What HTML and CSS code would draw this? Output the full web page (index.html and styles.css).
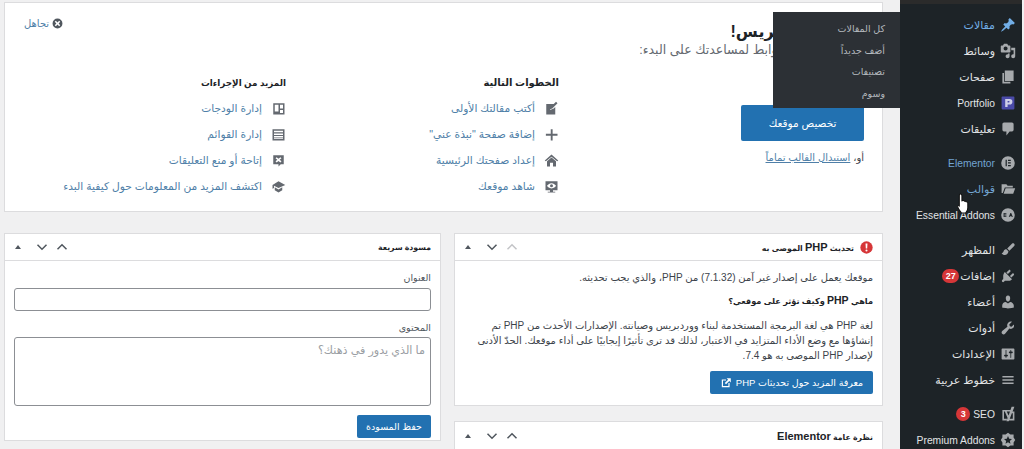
FILE: index.html
```html
<!DOCTYPE html>
<html lang="ar" dir="rtl">
<head>
<meta charset="utf-8">
<title>لوحة التحكم</title>
<link rel="stylesheet" href="styles.css">
</head>
<body>
<aside class="side">
  <nav class="menu">
    <a class="item cur"><svg class="ic" viewBox="0 0 20 20"><path d="M10.440 3.020l1.820-1.820 6.360 6.350-1.830 1.820c-1.050-.68-2.480-.57-3.410.36l-.75.75c-.92.93-1.040 2.350-.35 3.410l-1.830 1.820-2.410-2.410-2.800 2.790c-.42.42-3.380 2.710-3.800 2.290s1.860-3.390 2.280-3.810l2.790-2.790L4.100 9.360l1.830-1.820c1.050.69 2.480.57 3.400-.36l.75-.75c.93-.92 1.050-2.350.36-3.410z"/></svg><span>مقالات</span></a>
    <a class="item"><svg class="ic" viewBox="0 0 20 20"><path d="M13 11V4c0-.55-.45-1-1-1h-1.670L9 1H5L3.670 3H2c-.55 0-1 .45-1 1v7c0 .55.45 1 1 1h10c.55 0 1-.45 1-1zM7 4.500c1.380 0 2.500 1.120 2.500 2.500S8.380 9.500 7 9.500 4.500 8.380 4.500 7 5.620 4.500 7 4.500zM14 6h5v10.500c0 1.380-1.120 2.500-2.500 2.500S14 17.880 14 16.500s1.120-2.500 2.500-2.500c.17 0 .34.020.5.050V9h-3V6zm-4 8.050V13h2v3.500c0 1.380-1.120 2.500-2.500 2.500S7 17.880 7 16.500 8.120 14 9.500 14c.17 0 .34.020.5.050z"/></svg><span>وسائط</span></a>
    <a class="item"><svg class="ic" viewBox="0 0 20 20"><path d="M6 15V2h11v13zm-1 1h8v2H3V5h2z"/></svg><span>صفحات</span></a>
    <a class="item"><svg class="ic" viewBox="0 0 20 20"><rect x="2" y="2" width="16" height="16" rx="1" fill="#4a4aa8"/><path fill-rule="evenodd" d="M6.500 5H12a3.500 3.500 0 010 7H9.500v3h-3zm3 2.500v2H11a1 1 0 000-2z" fill="#cfcfe8"/></svg><span class="lat">Portfolio</span></a>
    <a class="item"><svg class="ic" viewBox="0 0 20 20"><path d="M5 2h10c1.100 0 2 .9 2 2v7c0 1.100-.9 2-2 2h-3l-4 5v-5H5c-1.100 0-2-.9-2-2V4c0-1.100.9-2 2-2z"/></svg><span>تعليقات</span></a>
    <a class="item gap cur"><svg class="ic" viewBox="0 0 20 20"><path fill-rule="evenodd" d="M10 1.500a8.500 8.500 0 100 17 8.500 8.500 0 000-17zM7 6h1.500v8H7zm3 0h3.500v1.500H10zm0 3.200h3.500v1.500H10zm0 3.300h3.500V14H10z"/></svg><span class="lat">Elementor</span></a>
    <a class="item cur"><svg class="ic grey" viewBox="0 0 20 20"><path d="M2 4h6l1.500 2H16v2H6L3.500 15H2zM7 9h12l-2.500 7H4.500z"/></svg><span>قوالب</span></a>
    <a class="item"><svg class="ic" viewBox="0 0 20 20"><path fill-rule="evenodd" d="M10 1.500a8.500 8.500 0 100 17 8.500 8.500 0 000-17zM4.500 7.500H8v1H5.500v1H8v1H5.500v1H8v1H4.500zm8.500 0h1l2 5h-1.200l-.4-1h-2l-.4 1h-1z"/></svg><span class="lat">Essential Addons</span></a>
    <a class="item gap3"><svg class="ic" viewBox="0 0 20 20"><path d="M17.700 2.300c-.8-.8-2-.8-2.800 0L9 8.200l2.800 2.800 5.900-5.900c.8-.8.8-2 0-2.800zM8 9.200c-1.500 0-3 .8-3.500 2.300-.4 1.200-1.300 2.200-2.500 2.500 1.500 2.500 5 3 7 1 1.200-1.200 1.500-2.500 1.500-3.300z"/></svg><span>المظهر</span></a>
    <a class="item"><svg class="ic" viewBox="0 0 20 20"><path d="M13.110 4.360L9.870 7.600 8 5.730l3.240-3.240c.35-.34 1.050-.2 1.560.32.520.51.660 1.210.31 1.550zm-8 1.770l.91-1.120 9.010 9.010-1.190.84c-.71.710-2.630 1.160-3.820 1.160H6.140L4.900 17.260c-.59.590-1.540.590-2.120 0-.59-.58-.59-1.530 0-2.120l1.240-1.240v-3.880c0-1.130.52-3.090 1.090-3.890zm7.260 3.970l3.240-3.240c.34-.35 1.040-.2 1.550.31.520.51.660 1.210.31 1.550l-3.240 3.250z"/></svg><span>إضافات</span><b class="count">27</b></a>
    <a class="item"><svg class="ic" viewBox="0 0 20 20"><path d="M10 9.250c-2.270 0-2.730-3.440-2.730-3.440C7 4.020 7.820 2 9.970 2c2.160 0 2.980 2.020 2.710 3.810 0 0-.41 3.440-2.680 3.440zm0 2.570L12.720 10c2.390 0 4.520 2.330 4.520 4.530v2.490s-3.650 1.130-7.240 1.130c-3.650 0-7.240-1.130-7.240-1.130v-2.490c0-2.250 1.940-4.480 4.470-4.480z"/></svg><span>أعضاء</span></a>
    <a class="item"><svg class="ic" viewBox="0 0 20 20"><path d="M16.680 9.770c-1.340 1.340-3.300 1.670-4.950.99l-5.410 6.520c-.99.990-2.590.990-3.580 0s-.99-2.590 0-3.570l6.520-5.420c-.68-1.650-.35-3.610.99-4.950 1.280-1.280 3.120-1.640 4.720-1.080L11.570 5.660l.71 2.120 2.120.71 2.910-2.910c.56 1.600.2 3.440-.63 4.190z"/></svg><span>أدوات</span></a>
    <a class="item"><svg class="ic" viewBox="0 0 20 20"><path d="M18 16V4c0-.55-.45-1-1-1H3c-.55 0-1 .45-1 1v12c0 .55.45 1 1 1h14c.55 0 1-.45 1-1zM8 11h1c.55 0 1 .45 1 1s-.45 1-1 1H8v1.500c0 .28-.22.5-.5.5s-.5-.22-.5-.5V13H6c-.55 0-1-.45-1-1s.45-1 1-1h1V5.500c0-.28.22-.5.5-.5s.5.22.5.5V11zm5-2h-1c-.55 0-1-.45-1-1s.45-1 1-1h1V5.500c0-.28.22-.5.5-.5s.5.22.5.5V7h1c.55 0 1 .45 1 1s-.45 1-1 1h-1v5.500c0 .28-.22.5-.5.5s-.5-.22-.5-.5V9z"/></svg><span>الإعدادات</span></a>
    <a class="item"><svg class="ic" viewBox="0 0 20 20"><path d="M3 5h14v2H3zm0 4h14v2H3zm0 4h14v2H3z"/></svg><span>خطوط عربية</span></a>
    <a class="item gap2"><svg class="ic" viewBox="0 0 20 20"><path d="M3 5h11l-1 2H5v9h4l-1 2H3zM18 1l-7 18H8l1.500-4L6 7h2.500l2.200 5L14.500 1zM15 7h3v11h-8l1-2h5V9h-2z"/></svg><span class="lat">SEO</span><b class="count round">3</b></a>
    <a class="item"><svg class="ic" viewBox="0 0 20 20"><path fill-rule="evenodd" d="M10 1l3 2h4v4l2 3-2 3v4h-4l-3 2-3-2H3v-4l-2-3 2-3V3h4zm0 4l-1.500 3.500-3.500.3 2.700 2.300-.8 3.500 3.100-1.800 3.100 1.800-.8-3.500L15 8.800l-3.500-.3z"/></svg><span class="lat">Premium Addons</span></a>
  </nav>
</aside>

<main class="main">
  <section class="welcome">
    <a class="dismiss"><svg class="x" viewBox="0 0 20 20"><path fill-rule="evenodd" d="M10 1a9 9 0 100 18 9 9 0 000-18zM7 5l3 3 3-3 2 2-3 3 3 3-2 2-3-3-3 3-2-2 3-3-3-3z"/></svg>تجاهل</a>
    <h2>أهلاً بووردبريس!</h2>
    <p class="about">جمعنا بعض الروابط لمساعدتك على البدء:</p>
    <div class="cols">
      <div class="col first">
        <a class="btn big">تخصيص موقعك</a>
        <p class="alt">أو، <a>استبدال القالب تماماً</a></p>
      </div>
      <div class="col second">
        <h3>الخطوات التالية</h3>
        <a class="act"><svg viewBox="0 0 20 20"><path d="M3 4h10l-3 3-2 5 5-2 2-2v10H3zM16 1l2 2-7 7-3 1 1-3z"/></svg>أكتب مقالتك الأولى</a>
        <a class="act"><svg viewBox="0 0 20 20"><path d="M9 3h2.500v6H18v2.500h-6.500V18H9v-6.500H2.500V9H9z"/></svg>إضافة صفحة "نبذة عني"</a>
        <a class="act"><svg viewBox="0 0 20 20"><path d="M10 2l9 8-1.500 1L10 5l-7.500 6L1 10zM4 11l6-5 6 5v7h-4v-5H8v5H4z"/></svg>إعداد صفحتك الرئيسية</a>
        <a class="act"><svg viewBox="0 0 20 20"><path fill-rule="evenodd" d="M2 3h16v12h-6v2h3v1H5v-1h3v-2H2zm8 2.500c-3 0-5 2-6 3.500 1 1.500 3 3.500 6 3.500s5-2 6-3.500c-1-1.500-3-3.500-6-3.500zM10 7a2 2 0 110 4 2 2 0 010-4z"/></svg>شاهد موقعك</a>
      </div>
      <div class="col third">
        <h3>المزيد من الإجراءات</h3>
        <a class="act"><svg viewBox="0 0 20 20"><path fill-rule="evenodd" d="M3 3h15v15H3zm9 2v5h4V5zM5 5v9h5V5zm7 7v4h4v-4z"/></svg>إدارة الودجات</a>
        <a class="act"><svg viewBox="0 0 20 20"><path fill-rule="evenodd" d="M2 3h16v15H2zm2 2v2h12V5zm0 3.500v2h12v-2zm0 3.500v2h12v-2zm0 3v1h12v-1z"/></svg>إدارة القوائم</a>
        <a class="act"><svg viewBox="0 0 20 20"><path fill-rule="evenodd" d="M3 3h14v12h-4l-3 3v-3H3zm4.500 2.500L6 7l2.500 2L6 11l1.500 1.500L10 10.500l2.500 2L14 11l-2.500-2L14 7l-1.500-1.500L10 7.500z"/></svg>إتاحة أو منع التعليقات</a>
        <a class="act"><svg viewBox="0 0 20 20"><path d="M10 3l9 5-9 4-6-3v3l-2 1V8zM5 11l5 3 5-3v4l-5 3-5-3z"/></svg>اكتشف المزيد من المعلومات حول كيفية البدء</a>
      </div>
    </div>
  </section>

  <div class="boxes">
    <div class="stack">
      <section class="box">
        <header class="head">
          <h4><svg class="warn" viewBox="0 0 20 20"><circle cx="10" cy="10" r="9.500"/><path d="M8.500 4h3l-.4 7.500H8.900zM10 13a1.600 1.600 0 110 3.200 1.600 1.600 0 010-3.200z" fill="#fff"/></svg><span>تحديث <em class="en">PHP</em> الموصى به</span></h4>
          <div class="ctl"><svg viewBox="0 0 16 10"><path d="M2 8l6-6 6 6" class="dim"/></svg><svg viewBox="0 0 16 10"><path d="M2 2l6 6 6-6"/></svg><i class="tri"></i></div>
        </header>
        <div class="body php">
          <p>موقعك يعمل على إصدار غير آمن (7.1.32) من PHP، والذي يجب تحديثه.</p>
          <p class="q">ماهي <em class="en">PHP</em> وكيف تؤثر على موقعي؟</p>
          <p class="long">لغة PHP هي لغة البرمجة المستخدمة لبناء ووردبريس وصيانته. الإصدارات الأحدث من PHP تم إنشاؤها مع وضع الأداء المتزايد في الاعتبار، لذلك قد ترى تأثيرًا إيجابيًا على أداء موقعك. الحدّ الأدنى لإصدار PHP الموصى به هو 7.4.</p>
          <a class="btn small learn">معرفة المزيد حول تحديثات PHP <svg class="ext" viewBox="0 0 20 20"><path d="M3 4h7v2H5v9h9v-5h2v7H3zM11 2h7v7l-2.500-2.500L10 12l-2-2 5.500-5.500z"/></svg></a>
        </div>
      </section>
      <section class="box">
        <header class="head">
          <h4><span>نظرة عامة <em class="en">Elementor</em></span></h4>
          <div class="ctl"><svg viewBox="0 0 16 10"><path d="M2 8l6-6 6 6"/></svg><svg viewBox="0 0 16 10"><path d="M2 2l6 6 6-6"/></svg><i class="tri"></i></div>
        </header>
      </section>
    </div>
    <div class="stack narrow">
      <section class="box">
        <header class="head">
          <h4>مسودة سريعة</h4>
          <div class="ctl"><svg viewBox="0 0 16 10"><path d="M2 8l6-6 6 6"/></svg><svg viewBox="0 0 16 10"><path d="M2 2l6 6 6-6"/></svg><i class="tri"></i></div>
        </header>
        <form class="body draft">
          <label class="lbl" for="t">العنوان</label>
          <input id="t" class="field" type="text">
          <label class="lbl two" for="c">المحتوى</label>
          <textarea id="c" class="field area" placeholder="ما الذي يدور في ذهنك؟"></textarea>
          <a class="btn small save">حفظ المسودة</a>
        </form>
      </section>
    </div>
  </div>
</main>

<div class="fly">
  <a>كل المقالات</a>
  <a>أضف جديداً</a>
  <a>تصنيفات</a>
  <a>وسوم</a>
</div>

<svg class="hand" viewBox="0 0 14 20"><path d="M4 1c1 0 1.500.7 1.500 1.500v5l1-.3c.8-.2 1.300.1 1.500.6.800-.2 1.300 0 1.600.6.800-.2 1.500.2 1.500 1V14c0 2-1 4-2 5H5c-1-1.500-3.500-5-3.500-6 0-1 1-1.300 1.500-.8V2.500C3 1.500 3.500 1 4 1z" fill="#fff" stroke="#111" stroke-width="1"/></svg>
</body>
</html>
```

FILE: styles.css
```css
* { box-sizing: border-box; }
html, body { margin: 0; height: 449px; overflow: hidden; }
body {
  position: relative;
  display: flex;
  background: #f0f0f1;
  font-family: "Liberation Sans", "DejaVu Sans", sans-serif;
  font-size: 10px;
  color: #3c434a;
}
a { color: #4f7fa8; text-decoration: none; }
p, h2, h3, h4 { margin: 0; }
em { font-style: normal; }

/* admin sidebar */
.side {
  flex: 0 0 122px;
  margin-right: 2px;
  height: 449px;
  background: #1d2327;
  border-top: 4px solid #2b2b2b;
  padding-top: 8px;
  overflow: hidden;
}
.menu { display: flex; flex-direction: column; }
.item {
  display: flex;
  align-items: center;
  gap: 5px;
  height: 26px;
  padding-right: 6px;
  color: #e2e4e6;
  font-size: 11px;
  white-space: nowrap;
}
.lat { font-size: 10.300px; }
.item.gap { margin-top: 8px; }
.item.gap2 { margin-top: 8px; }
.item.gap3 { margin-top: 9px; }
.item.cur { color: #72aee6; }
.item.cur:nth-child(n+6) { color: #72a4d2; }
.ic { width: 16px; height: 16px; flex: none; fill: #a7aaad; }
.item:first-child .ic { fill: #72aee6; }
.count {
  margin-right: -4px;
  min-width: 17px;
  height: 14px;
  line-height: 14px;
  border-radius: 8px;
  background: #d63638;
  color: #fff;
  text-align: center;
  font-size: 9px;
}
.count.round { min-width: 14px; margin-right: -2px; }

/* content column */
.main { flex: 0 0 896px; padding: 2px 17px 0 0; width: 896px; }

.welcome {
  position: relative;
  width: 879px;
  height: 210px;
  background: #fff;
  border: 1px solid #dcdcde;
  padding: 20px 18px 0 0;
}
.welcome h2 { margin-right: 7px; font-size: 16px; font-weight: 700; color: #1d2327; line-height: 18px; }
.about { margin: 1px 12px 0 0; font-size: 12.500px; color: #646970; line-height: 16px; }
.dismiss {
  position: absolute;
  left: 19px;
  top: 15px;
  display: flex;
  align-items: center;
  gap: 3px;
  font-size: 10px;
}
.x { width: 11px; height: 11px; fill: #50575e; }

.cols { display: flex; margin-top: 18px; }
.col { display: flex; flex-direction: column; }
.first { width: 305px; }
.first .big { width: 123px; height: 36px; margin-top: 29px; }
.alt { margin-top: 11px; font-size: 10px; color: #3c434a; }
.alt a { text-decoration: underline; }
.second { width: 273px; }
.col h3 { font-size: 10px; font-weight: 700; color: #1d2327; line-height: 14px; margin-bottom: 5px; }
.third h3 { font-size: 8.800px; }
.act {
  display: flex;
  align-items: center;
  gap: 9px;
  height: 26px;
  font-size: 10.700px;
  white-space: nowrap;
}
.act svg { width: 15px; height: 15px; flex: none; fill: #646970; }

.btn {
  display: flex;
  align-items: center;
  justify-content: center;
  border-radius: 2px;
  background: #2271b1;
  color: #fff;
}
.big { font-size: 10.500px; }
.small { font-size: 9.500px; height: 23px; }

/* postboxes */
.boxes { display: flex; gap: 13px; margin-top: 21px; }
.stack { flex: 0 0 429px; display: flex; flex-direction: column; gap: 15px; }
.stack.narrow { flex: 0 0 437px; }
.box { background: #fff; border: 1px solid #dcdcde; }
.head {
  display: flex;
  align-items: center;
  justify-content: space-between;
  height: 27px;
  padding: 0 9px 0 10px;
  border-bottom: 1px solid #dcdcde;
}
.box:last-child:not(:first-child) .head { border-bottom: 0; }
.head h4 {
  display: flex;
  align-items: center;
  gap: 6px;
  font-size: 7.800px;
  font-weight: 700;
  color: #1d2327;
}
.head .en { font-size: 11px; }
.warn { width: 13px; height: 13px; fill: #d63638; flex: none; }
.ctl { display: flex; align-items: center; gap: 8px; }
.ctl svg { width: 12px; height: 8px; fill: none; stroke: #50575e; stroke-width: 2; }
.ctl svg .dim { stroke: #c3c4c7; }
.tri {
  width: 0;
  height: 0;
  margin-right: 7px;
  border: 3px solid transparent;
  border-top: 0;
  border-bottom: 4px solid #50575e;
}
.body { padding: 0 9px; }
.php { height: 144px; padding: 9px 9px 0 10px; font-size: 10px; line-height: 15px; }
.php .q { margin-top: 8px; font-size: 8.200px; font-weight: 700; color: #1d2327; }
.php .q .en { font-size: 10.500px; }
.php .long { margin-top: 9px; }
.learn { width: 163px; margin-top: 8px; gap: 4px; }
.ext { width: 12px; height: 12px; fill: #fff; }

.draft { display: flex; flex-direction: column; padding-top: 10px; }
.lbl { font-size: 9.500px; line-height: 14px; color: #50575e; }
.lbl.two { margin-top: 10px; }
.field {
  width: 417px;
  margin: 3px 0 0 0;
  align-self: flex-start;
  border: 1px solid #8c8f94;
  border-radius: 3px;
  background: #fff;
  height: 23px;
  font: 11.200px "Liberation Sans", "DejaVu Sans", sans-serif;
  resize: none;
  display: block;
}
.area { height: 69px; margin-top: 2px; padding: 6px 5px; }
.area::placeholder { color: #9a9ea3; }
.save { width: 74px; margin-top: 9px; margin-bottom: 2px; }

/* hover flyout over the welcome panel */
.fly {
  position: absolute;
  left: 773px;
  top: 12px;
  width: 127px;
  height: 96px;
  padding: 6px 15px 0 0;
  background: #2c3035;
  display: flex;
  flex-direction: column;
}
.fly a { height: 21.500px; line-height: 21.500px; color: #b4b9be; font-size: 9.500px; }

.hand { position: absolute; left: 956px; top: 193px; width: 15px; height: 21px; }
```
